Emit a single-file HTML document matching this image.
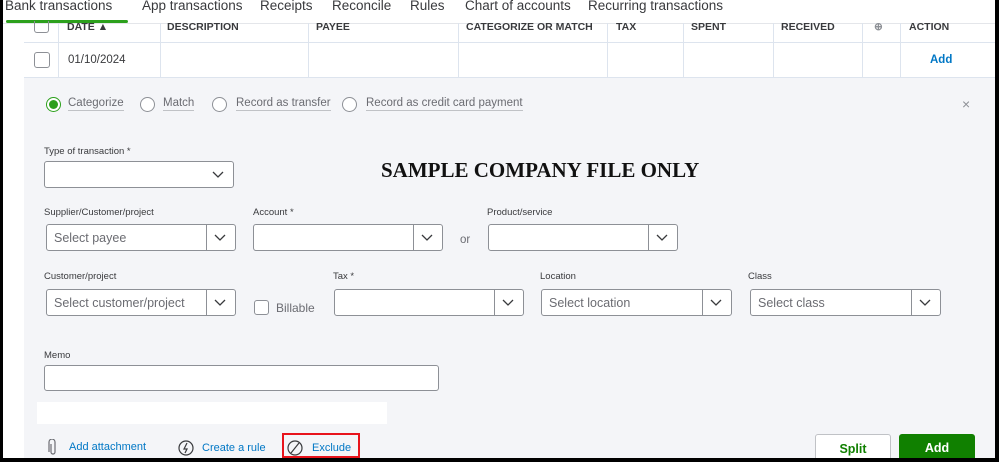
<!DOCTYPE html><html><head><style>
*{margin:0;padding:0;box-sizing:border-box}
body{width:999px;height:462px;background:#000;position:relative;overflow:hidden;font-family:"Liberation Sans",sans-serif;color:#393a3d}
.main{position:absolute;left:3px;top:0;width:992px;height:458px;background:#fff;overflow:hidden}
.a{position:absolute}
.tab{position:absolute;top:-2px;font-size:13.5px;color:#393a3d}
.th{position:absolute;top:21px;font-size:10.5px;font-weight:bold;color:#393a3d}
.vl{position:absolute;width:1px;background:#dde4ee}
.panel{position:absolute;left:21px;top:78px;width:971px;height:380px;background:#f4f5f8}
.lbl{position:absolute;font-size:9.5px;color:#393a3d}
.sel{position:absolute;height:27px;background:#fff;border:1px solid #8d9096;border-radius:3px;font-size:12.5px;color:#6b6c72;padding:6px 7px}
.sel .dv{position:absolute;right:28px;top:0;bottom:0;width:1px;background:#8d9096}
.sel svg{position:absolute;right:9px;top:9px}
.radio{position:absolute;width:15px;height:15px;border:1px solid #8d9096;border-radius:50%;background:#fff}
.rl{position:absolute;font-size:11.5px;color:#6b6c72;border-bottom:1px solid #c0c2c6;padding-bottom:1px}
.lk{position:absolute;font-size:11px;color:#0077c5}
</style></head><body><div class="main">
<span class="tab" style="left:2px">Bank transactions</span>
<span class="tab" style="left:139px">App transactions</span>
<span class="tab" style="left:257px">Receipts</span>
<span class="tab" style="left:329px">Reconcile</span>
<span class="tab" style="left:407px">Rules</span>
<span class="tab" style="left:462px">Chart of accounts</span>
<span class="tab" style="left:585px">Recurring transactions</span>
<div class="a" style="left:3px;top:20px;width:122px;height:3px;background:#2ca01c;border-radius:2px"></div>
<div class="a" style="left:0;top:23px;width:992px;height:1px;background:#e4e6ea"></div>
<div class="a" style="left:31px;top:21px;width:15px;height:12px;border:1px solid #8d9096;border-top:none;border-radius:0 0 3px 3px"></div>
<span class="th" style="left:64px">DATE ▲</span>
<span class="th" style="left:164px">DESCRIPTION</span>
<span class="th" style="left:313px">PAYEE</span>
<span class="th" style="left:463px">CATEGORIZE OR MATCH</span>
<span class="th" style="left:613px">TAX</span>
<span class="th" style="left:688px">SPENT</span>
<span class="th" style="left:778px">RECEIVED</span>
<span class="th" style="left:871px;color:#8d9096">⊕</span>
<span class="th" style="left:906px">ACTION</span>
<div class="a" style="left:21px;top:42px;width:971px;height:1px;background:#dde4ee"></div>
<div class="a" style="left:21px;top:77px;width:971px;height:1px;background:#dde4ee"></div>
<div class="vl" style="left:55px;top:23px;height:54px"></div>
<div class="vl" style="left:157px;top:23px;height:54px"></div>
<div class="vl" style="left:305px;top:23px;height:54px"></div>
<div class="vl" style="left:455px;top:23px;height:54px"></div>
<div class="vl" style="left:604px;top:23px;height:54px"></div>
<div class="vl" style="left:680px;top:23px;height:54px"></div>
<div class="vl" style="left:770px;top:23px;height:54px"></div>
<div class="vl" style="left:859px;top:23px;height:54px"></div>
<div class="vl" style="left:897px;top:23px;height:54px"></div>
<div class="a" style="left:31px;top:52px;width:16px;height:16px;border:1px solid #8d9096;border-radius:3px"></div>
<span class="a" style="left:65px;top:54px;font-size:11.5px">01/10/2024</span>
<span class="a" style="left:927px;top:54px;font-size:11.5px;font-weight:bold;color:#0077c5">Add</span>
<div class="panel">
<div class="radio" style="left:22px;top:19px;border-color:#2ca01c"><div style="position:absolute;left:2px;top:2px;width:9px;height:9px;border-radius:50%;background:#2ca01c"></div></div>
<span class="rl" style="left:44px;top:19px">Categorize</span>
<div class="radio" style="left:116px;top:19px"></div><span class="rl" style="left:139px;top:19px">Match</span>
<div class="radio" style="left:188px;top:19px"></div><span class="rl" style="left:212px;top:19px">Record as transfer</span>
<div class="radio" style="left:318px;top:19px"></div><span class="rl" style="left:342px;top:19px">Record as credit card payment</span>
<span class="a" style="left:938px;top:18px;font-size:14px;color:#8d9096">×</span>
<span class="lbl" style="left:20px;top:68px">Type of transaction *</span>
<div class="sel" style="left:20px;top:83px;width:190px;height:27px"><svg width="12" height="8"><path d="M1 1l5 5 5-5" stroke="#393a3d" fill="none" stroke-width="1.3"/></svg></div>
<div class="a" style="left:357px;top:80px;font-family:'Liberation Serif',serif;font-weight:bold;font-size:21px;color:#111">SAMPLE COMPANY FILE ONLY</div>
<span class="lbl" style="left:20px;top:129px">Supplier/Customer/project</span>
<div class="sel" style="left:22px;top:146px;width:190px">Select payee<div class="dv"></div><svg width="12" height="8"><path d="M1 1l5 5 5-5" stroke="#393a3d" fill="none" stroke-width="1.3"/></svg></div>
<span class="lbl" style="left:229px;top:129px">Account *</span>
<div class="sel" style="left:229px;top:146px;width:190px"><div class="dv"></div><svg width="12" height="8"><path d="M1 1l5 5 5-5" stroke="#393a3d" fill="none" stroke-width="1.3"/></svg></div>
<span class="a" style="left:436px;top:156px;font-size:11.5px;color:#6b6c72">or</span>
<span class="lbl" style="left:463px;top:129px">Product/service</span>
<div class="sel" style="left:464px;top:146px;width:190px"><div class="dv"></div><svg width="12" height="8"><path d="M1 1l5 5 5-5" stroke="#393a3d" fill="none" stroke-width="1.3"/></svg></div>
<span class="lbl" style="left:20px;top:193px">Customer/project</span>
<div class="sel" style="left:22px;top:211px;width:190px">Select customer/project<div class="dv"></div><svg width="12" height="8"><path d="M1 1l5 5 5-5" stroke="#393a3d" fill="none" stroke-width="1.3"/></svg></div>
<div class="a" style="left:230px;top:222px;width:15px;height:15px;border:1px solid #8d9096;border-radius:3px;background:#fff"></div>
<span class="a" style="left:252px;top:223px;font-size:12px;color:#6b6c72">Billable</span>
<span class="lbl" style="left:309px;top:193px">Tax *</span>
<div class="sel" style="left:310px;top:211px;width:190px"><div class="dv"></div><svg width="12" height="8"><path d="M1 1l5 5 5-5" stroke="#393a3d" fill="none" stroke-width="1.3"/></svg></div>
<span class="lbl" style="left:516px;top:193px">Location</span>
<div class="sel" style="left:517px;top:211px;width:191px">Select location<div class="dv"></div><svg width="12" height="8"><path d="M1 1l5 5 5-5" stroke="#393a3d" fill="none" stroke-width="1.3"/></svg></div>
<span class="lbl" style="left:724px;top:193px">Class</span>
<div class="sel" style="left:726px;top:211px;width:191px">Select class<div class="dv"></div><svg width="12" height="8"><path d="M1 1l5 5 5-5" stroke="#393a3d" fill="none" stroke-width="1.3"/></svg></div>
<span class="lbl" style="left:20px;top:272px">Memo</span>
<div class="a" style="left:20px;top:287px;width:395px;height:26px;background:#fff;border:1px solid #8d9096;border-radius:3px"></div>
<div class="a" style="left:13px;top:324px;width:350px;height:22px;background:#fff"></div>
<svg class="a" style="left:24px;top:361px" width="10" height="18"><path d="M3 5v8a2 2 0 004 0V3a3 3 0 00-6 0v10" stroke="#6b6c72" fill="none" stroke-width="1.2"/></svg>
<span class="lk" style="left:45px;top:363px">Add attachment</span>
<svg class="a" style="left:154px;top:362px" width="16" height="16"><circle cx="8" cy="8" r="7" stroke="#393a3d" fill="none" stroke-width="1.2"/><path d="M9 3L6 9h3l-2 4" stroke="#393a3d" fill="none" stroke-width="1.2"/></svg>
<span class="lk" style="left:178px;top:364px">Create a rule</span>
<div class="a" style="left:258px;top:355px;width:78px;height:25px;border:2px solid #e8141c"></div>
<svg class="a" style="left:263px;top:362px" width="16" height="16"><circle cx="8" cy="8" r="7" stroke="#393a3d" fill="none" stroke-width="1.2"/><path d="M12 3L4 13" stroke="#393a3d" stroke-width="1.2"/></svg>
<span class="lk" style="left:288px;top:364px">Exclude</span>
<div class="a" style="left:791px;top:356px;width:76px;height:30px;background:#fff;border:1px solid #c0c2c6;border-radius:3px;text-align:center;padding-top:7px;font-size:12.5px;font-weight:bold;color:#108000">Split</div>
<div class="a" style="left:875px;top:356px;width:76px;height:30px;background:#108000;border-radius:3px;text-align:center;padding-top:7px;font-size:12.5px;font-weight:bold;color:#fff">Add</div>
</div>
</div></body></html>
